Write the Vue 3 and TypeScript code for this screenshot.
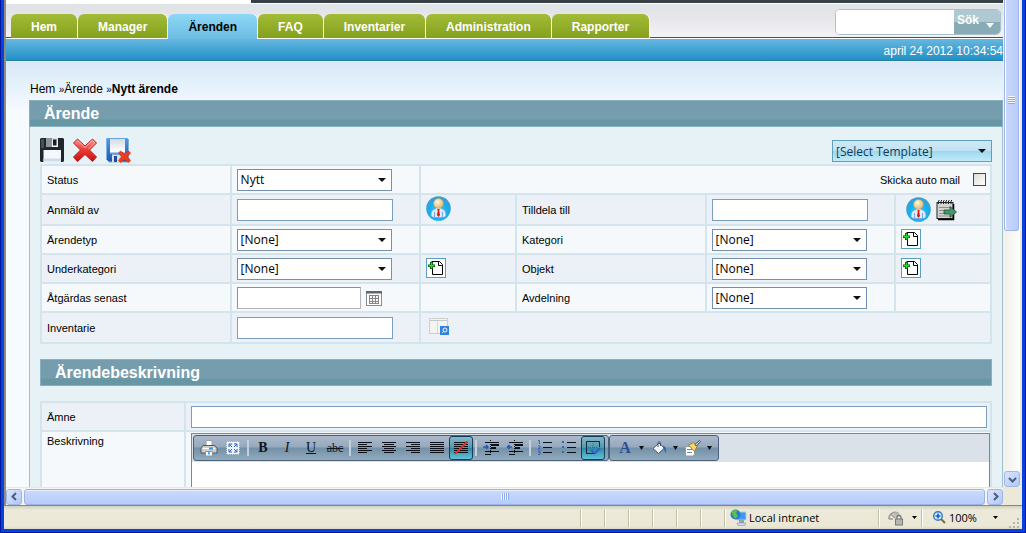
<script setup lang="ts">
import { ref } from 'vue'

interface Tab {
  label: string
  active?: boolean
}

interface Tool {
  id: string
  title: string
  on?: boolean
}

const tabs: Tab[] = [
  { label: 'Hem' },
  { label: 'Manager' },
  { label: 'Ärenden', active: true },
  { label: 'FAQ' },
  { label: 'Inventarier' },
  { label: 'Administration' },
  { label: 'Rapporter' },
]

const toolGroups: Tool[][] = [
  [
    { id: 'print', title: 'Print' },
    { id: 'full', title: 'Full screen' },
  ],
  [
    { id: 'bold', title: 'Bold' },
    { id: 'italic', title: 'Italic' },
    { id: 'underline', title: 'Underline' },
    { id: 'strike', title: 'Strikethrough' },
  ],
  [
    { id: 'left', title: 'Align left' },
    { id: 'center', title: 'Center' },
    { id: 'right', title: 'Align right' },
    { id: 'justify', title: 'Justify' },
    { id: 'noalign', title: 'No alignment', on: true },
  ],
  [
    { id: 'indent', title: 'Indent' },
    { id: 'outdent', title: 'Outdent' },
  ],
  [
    { id: 'ol', title: 'Numbered list' },
    { id: 'ul', title: 'Bullet list' },
    { id: 'borders', title: 'Show borders', on: true },
  ],
]

const colorTools: Tool[] = [
  { id: 'fore', title: 'Text color' },
  { id: 'fill', title: 'Background color' },
  { id: 'brush', title: 'Apply style' },
]

const letters: Record<string, string> = { bold: 'B', italic: 'I', underline: 'U', strike: 'abc', fore: 'A' }

const search = ref('')
const autoMail = ref(false)
const subject = ref('')
</script>

<template>
  <div class="window">
    <svg class="defs" width="0" height="0" aria-hidden="true">
      <defs>
        <linearGradient id="gRed" x1="0" y1="0" x2="0" y2="1">
          <stop offset="0" stop-color="#f59a92" />
          <stop offset="0.5" stop-color="#ea3a34" />
          <stop offset="1" stop-color="#c40f10" />
        </linearGradient>
        <linearGradient id="gBlue" x1="0" y1="0" x2="0" y2="1">
          <stop offset="0" stop-color="#4f9be8" />
          <stop offset="1" stop-color="#1c56ae" />
        </linearGradient>
        <linearGradient id="gPaper" x1="0" y1="0" x2="0" y2="1">
          <stop offset="0" stop-color="#d5dbe0" />
          <stop offset="1" stop-color="#fff" />
        </linearGradient>
        <radialGradient id="gHead" cx="0.4" cy="0.35" r="0.7">
          <stop offset="0" stop-color="#fff6dc" />
          <stop offset="1" stop-color="#d9b36c" />
        </radialGradient>
        <radialGradient id="gCircle" cx="0.5" cy="0.6" r="0.5">
          <stop offset="0" stop-color="#35c8f8" />
          <stop offset="0.8" stop-color="#12aeee" />
          <stop offset="1" stop-color="#3a9fd4" />
        </radialGradient>
      </defs>
      <symbol id="person" viewBox="0 0 25 25">
        <circle cx="12.500" cy="12.500" r="12.300" fill="url(#gCircle)" />
        <path d="M5 19c0-4 2-6 5-6.500h5c3 .5 5 2.500 5 6.500 0 1.500-1.500 2.500-3 2.500H8c-1.500 0-3-1-3-2.500z" fill="#dcecfb" stroke="#6f9fd0" stroke-width=".7" />
        <path d="M8.500 16v5.500M16.500 16v5.500" stroke="#7ba7dc" />
        <path d="M10 12l2.500 3 2.500-3z" fill="#fff" />
        <path d="M11.300 13h2.400l-.5 2 .8 4-1.500 2-1.500-2 .8-4z" fill="#d8151a" />
        <circle cx="12.500" cy="7.500" r="5" fill="url(#gHead)" stroke="#b99250" stroke-width=".5" />
      </symbol>
      <symbol id="add" viewBox="0 0 20 20">
        <rect x=".5" y=".5" width="19" height="19" fill="#fff" stroke="#5b9fc4" />
        <path d="M6.500 4.500v12h10v-10l-3-3h-8" fill="#fff" stroke="#000" />
        <path d="M12.500 4v3.500H16" fill="none" stroke="#000" />
        <path d="M4 4h3v2.500h2v2.500H7v2H4V9H2V6.500h2z" fill="#043d08" />
        <path d="M5.500 4.500v6M2.500 7.700h6" stroke="#1ee02a" stroke-width="1.600" />
      </symbol>
    </svg>

    <div class="browser">
      <main class="page">
        <div class="strip"><span></span></div>
        <header class="masthead">
          <nav class="tabs">
            <a v-for="t in tabs" :key="t.label" href="#" class="tab" :class="{ active: t.active }">{{ t.label }}</a>
          </nav>
          <form class="search" @submit.prevent>
            <input v-model="search" type="text" aria-label="Sök" />
            <button type="submit">Sök<svg width="8" height="5"><path d="M0 0h8L4 5z" fill="#fff" /></svg></button>
          </form>
        </header>
        <div class="datebar">april 24 2012 10:34:54</div>

        <div class="content">
          <div class="crumbs">
            <a href="#">Hem</a> <small>»</small><a href="#">Ärende</a> <small>»</small><b>Nytt ärende</b>
          </div>
          <h1 class="title">Ärende</h1>
          <div class="panel">
            <div class="actions">
              <button type="button" aria-label="Spara">
                <svg width="24" height="24" viewBox="0 0 24 24">
                  <path d="M1 0h22l1 1v22l-1 1H1l-1-1V1z" fill="#20262e" />
                  <path d="M1 1h3v9H1z" fill="#46505c" />
                  <rect x="6" y="0" width="12" height="9" fill="url(#gPaper)" />
                  <rect x="6" y="0" width="6" height="9" fill="#8d949b" />
                  <rect x="13" y="1.500" width="3.500" height="6" fill="#191c20" />
                  <rect x="3.500" y="12" width="17.500" height="12" fill="#f4f7fb" />
                  <path d="M3.500 20.500h17.500v3H3.500z" fill="#d2dbe8" />
                </svg>
              </button>
              <button type="button" aria-label="Avbryt">
                <svg width="24" height="24" viewBox="0 0 24 24">
                  <path d="M4.500 1L12 8l7.500-7L23.500 5l-7 7 7 7-4 4.500L12 16.500l-7.500 7L.5 19l7-7-7-7z" fill="url(#gRed)" stroke="#c01a1c" stroke-linejoin="round" />
                  <path d="M4.600 2.500L12 9.500l7.400-7 2.500 2.500-6.500 6" fill="none" stroke="#fbc4be" stroke-width=".8" />
                </svg>
              </button>
              <button type="button" aria-label="Spara och stäng">
                <svg width="25" height="25" viewBox="0 0 25 25">
                  <path d="M1 0h20l1.500 1.500V24H3l-2.500-2.500V1z" fill="url(#gBlue)" stroke="#7fb0e4" />
                  <rect x="4" y="1" width="15" height="13" fill="url(#gPaper)" />
                  <path d="M4 14h15v1.500H4z" fill="#a9c9ee" />
                  <rect x="6" y="16.500" width="10" height="8" fill="#d7dfe6" />
                  <rect x="8" y="18" width="3" height="6" fill="#1e4d91" />
                  <path d="M14.500 13l4 3 4-3 2 2-3 3.700 3 3.800-2 2-4-3-4 3-2-2 3-3.800-3-3.700z" fill="#ee3c1c" stroke="#c93016" stroke-width=".7" />
                </svg>
              </button>
              <span class="sel template">
                <select aria-label="Mall"><option>[Select Template]</option></select>
              </span>
            </div>

            <table class="grid fields">
              <colgroup><col class="wide" /><col class="wide" /><col class="slim" /><col class="wide" /><col class="wide" /><col class="slim" /></colgroup>
              <tbody>
                <tr>
                  <td><label for="status">Status</label></td>
                  <td><span class="sel"><select id="status"><option>Nytt</option></select></span></td>
                  <td colspan="4" class="auto">
                    <label for="auto">Skicka auto mail</label><input id="auto" v-model="autoMail" type="checkbox" />
                  </td>
                </tr>
                <tr class="tall">
                  <td><label for="reporter">Anmäld av</label></td>
                  <td><input id="reporter" class="txt" type="text" /></td>
                  <td><button type="button" aria-label="Välj person"><svg width="25" height="25"><use href="#person" /></svg></button></td>
                  <td><label for="assign">Tilldela till</label></td>
                  <td><input id="assign" class="txt" type="text" /></td>
                  <td class="pair">
                    <button type="button" aria-label="Välj ansvarig"><svg width="25" height="25"><use href="#person" /></svg></button>
                    <button type="button" aria-label="Tilldela mig">
                      <svg width="21" height="22" viewBox="0 0 21 22">
                        <rect x="1" y="3.500" width="16" height="16" fill="#d4d4d0" stroke="#222" />
                        <path d="M17.500 5v15.500H2" fill="none" stroke="#000" stroke-width="1.500" />
                        <path d="M3 8.500h12M3 11.500h9M3 14.500h9M3 17h12" stroke="#8f8f8b" />
                        <path d="M2.500 5V2l1-1M5 5V2l1-1M7.500 5V2l1-1M10 5V2l1-1M12.500 5V2l1-1M15 5V2l1-1" fill="none" stroke="#222" />
                        <path d="M8 11h6V7.500l6.500 5.500-6.500 5.500V15H8z" fill="#4b9473" stroke="#1d4f38" stroke-width=".8" />
                      </svg>
                    </button>
                  </td>
                </tr>
                <tr>
                  <td><label for="kind">Ärendetyp</label></td>
                  <td><span class="sel"><select id="kind"><option>[None]</option></select></span></td>
                  <td></td>
                  <td><label for="category">Kategori</label></td>
                  <td><span class="sel"><select id="category"><option>[None]</option></select></span></td>
                  <td><button type="button" aria-label="Lägg till kategori"><svg width="20" height="20"><use href="#add" /></svg></button></td>
                </tr>
                <tr>
                  <td><label for="sub">Underkategori</label></td>
                  <td><span class="sel"><select id="sub"><option>[None]</option></select></span></td>
                  <td><button type="button" aria-label="Lägg till underkategori"><svg width="20" height="20"><use href="#add" /></svg></button></td>
                  <td><label for="object">Objekt</label></td>
                  <td><span class="sel"><select id="object"><option>[None]</option></select></span></td>
                  <td><button type="button" aria-label="Lägg till objekt"><svg width="20" height="20"><use href="#add" /></svg></button></td>
                </tr>
                <tr>
                  <td><label for="due">Åtgärdas senast</label></td>
                  <td>
                    <div class="date">
                      <input id="due" class="txt" type="text" />
                      <button type="button" aria-label="Kalender">
                        <svg width="16" height="16" viewBox="0 0 16 16">
                          <rect x=".5" y="1.500" width="15" height="14" fill="#fff" stroke="#8a8a8a" />
                          <path d="M0 1h16v2.500H0z" fill="#666" />
                          <path d="M3 5.500h10M3 8.500h10M3 11.500h10M3 13.500h10M3.500 5v9M6.500 5v9M9.500 5v9M12.500 5v9" stroke="#858585" />
                        </svg>
                      </button>
                    </div>
                  </td>
                  <td></td>
                  <td><label for="dept">Avdelning</label></td>
                  <td><span class="sel"><select id="dept"><option>[None]</option></select></span></td>
                  <td></td>
                </tr>
                <tr class="tall">
                  <td><label for="inventory">Inventarie</label></td>
                  <td><input id="inventory" class="txt" type="text" /></td>
                  <td colspan="4" class="lookup">
                    <button type="button" aria-label="Sök inventarie">
                      <svg width="20" height="17" viewBox="0 0 20 17">
                        <rect x=".5" y=".5" width="18" height="15" fill="#f3f3f0" stroke="#cfcfcc" />
                        <path d="M1 2.500h17" stroke="#c4c8cc" />
                        <path d="M8.500 3v12" stroke="#d8d8d4" />
                        <rect x="11" y="8" width="9" height="9" fill="#2f82e0" />
                        <circle cx="16" cy="12" r="2" fill="none" stroke="#fff" />
                        <path d="M14.500 13.500L13 15" stroke="#fff" />
                      </svg>
                    </button>
                  </td>
                </tr>
              </tbody>
            </table>

            <h2 class="title">Ärendebeskrivning</h2>

            <table class="grid desc">
              <colgroup><col class="name" /><col /></colgroup>
              <tbody>
                <tr>
                  <td><label for="subject">Ämne</label></td>
                  <td><input id="subject" v-model="subject" class="txt full" type="text" /></td>
                </tr>
                <tr class="body">
                  <td><label for="text">Beskrivning</label></td>
                  <td>
                    <div class="editor">
                      <div class="toolbar">
                        <div class="group">
                          <template v-for="(g, i) in toolGroups" :key="i">
                            <i v-if="i > 0" class="sep"></i>
                            <button v-for="t in g" :key="t.id" type="button" class="tool" :class="[t.id, { on: t.on }]" :aria-label="t.title">
                              <template v-if="letters[t.id]">{{ letters[t.id] }}</template>
                              <svg v-else width="18" height="18" viewBox="0 0 18 18" fill="none" stroke="#0b1018">
                                <template v-if="t.id === 'print'">
                                  <path d="M6 1.500h6v6H6z" fill="#fff" stroke="#9aa1ab" />
                                  <path d="M3 6.500h12l2 3v4.500H1V9.500z" fill="#cfcfcd" stroke="#55585d" />
                                  <path d="M3 9.500h12" stroke="#fff" />
                                  <path d="M9 9.500h4" stroke="#3d8ee8" stroke-width="2" />
                                  <path d="M5.500 12.500h7v4.500h-7z" fill="#f4fbff" stroke="#8d949e" />
                                  <path d="M9 13v2.500" stroke="#4fb1f0" stroke-width="2" />
                                </template>
                                <template v-else-if="t.id === 'full'">
                                  <rect x="3" y="3" width="12" height="12" fill="#e9f2ff" stroke="#fff" stroke-dasharray="1 1" />
                                  <path d="M5 8V5h3M5 5l3 3M13 8V5h-3M13 5l-3 3M5 10v3h3M5 13l3-3M13 10v3h-3M13 13l-3-3" stroke="#3566c4" />
                                </template>
                                <path v-else-if="t.id === 'left'" d="M2 3.500h14M2 5.500h9M2 7.500h14M2 9.500h9M2 11.500h14M2 13.500h9" />
                                <path v-else-if="t.id === 'center'" d="M2 3.500h14M4 5.500h10M2 7.500h14M4 9.500h10M2 11.500h14M4 13.500h10" />
                                <path v-else-if="t.id === 'right'" d="M2 3.500h14M7 5.500h9M2 7.500h14M7 9.500h9M2 11.500h14M7 13.500h9" />
                                <path v-else-if="t.id === 'justify'" d="M2 3.500h14M2 5.500h14M2 7.500h14M2 9.500h14M2 11.500h14M2 13.500h14" />
                                <template v-else-if="t.id === 'noalign'">
                                  <path d="M2 3.500h14M2 5.500h14M2 7.500h14M2 9.500h14M2 11.500h14M2 13.500h14" />
                                  <path d="M3 15L15.500 2.500" stroke="#f02a1c" stroke-width="2" />
                                </template>
                                <template v-else-if="t.id === 'indent'">
                                  <path d="M3 3.500h14M3 12.500h14M3 15.500h6" />
                                  <path d="M9 6h8M9 9h5" stroke-width="2" />
                                  <path d="M8.500 1v16" stroke-dasharray="1 1" />
                                  <path d="M1 8h5M4 6l2 2-2 2" stroke="#2458b8" stroke-width="1.500" />
                                </template>
                                <template v-else-if="t.id === 'outdent'">
                                  <path d="M3 3.500h14M3 12.500h14M3 15.500h6" />
                                  <path d="M9 6h8M9 9h5" stroke-width="2" />
                                  <path d="M8.500 1v16" stroke-dasharray="1 1" />
                                  <path d="M1 8h5M3.500 6l-2 2 2 2" stroke="#2458b8" stroke-width="1.500" />
                                </template>
                                <template v-else-if="t.id === 'ol'">
                                  <path d="M7 3.500h9M7 8.500h9M7 13.500h9" />
                                  <path d="M2 1.500h1.500V5M2 7h2v1.500L2 10h2.500M2 12h2v3.500H2M2.500 13.500H4" stroke="#3a64b4" />
                                </template>
                                <template v-else-if="t.id === 'ul'">
                                  <path d="M7 3.500h9M7 8.500h9M7 13.500h9" />
                                  <path d="M2 3h2M2 8h2M2 13h2" stroke="#3a64b4" stroke-width="2" />
                                </template>
                                <template v-else>
                                  <path d="M15.500 8V2.500h-13v12h8" stroke="#16233c" />
                                  <path d="M9 4v9M4 8.500h9" stroke="#2b6b88" stroke-dasharray="1 1" />
                                  <path d="M7 11l3.500 3.500L16 9" stroke="#2e62c0" stroke-width="2" />
                                </template>
                              </svg>
                            </button>
                          </template>
                        </div>
                        <div class="group">
                          <button v-for="t in colorTools" :key="t.id" type="button" class="tool drop" :aria-label="t.title">
                            <span v-if="t.id === 'fore'" class="fore">A</span>
                            <svg v-else-if="t.id === 'fill'" class="pic" width="18" height="18" viewBox="0 0 18 18">
                              <path d="M3 9.500L9 4l5.500 5-6 5.500z" fill="#f2f6fb" stroke="#44546c" />
                              <path d="M8 8V3.500a1.500 1.500 0 0 1 2.500 0V7" fill="none" stroke="#44546c" />
                              <path d="M13 7c3 0 3.500 3 3 7-1.500-1-1.500-4-3-5z" fill="#2f62c4" />
                            </svg>
                            <svg v-else class="pic" width="18" height="18" viewBox="0 0 18 18">
                              <path d="M1.500 7.500h9v8l-2 1.500h-7z" fill="#fff" stroke="#9298a4" />
                              <path d="M3 10.500h5M3 13.500h5" stroke="#6f87b8" />
                              <path d="M4.500 6l5-2.500 3.500 4-2.500 5z" fill="#f6d768" stroke="#9c8028" />
                              <path d="M11 5.500l4.500-4 1 1-4 4.500z" fill="#d9e0ea" stroke="#3d4a5e" />
                            </svg>
                            <svg class="tri" width="5" height="4"><path d="M0 0h5L2.500 4z" fill="#111" /></svg>
                          </button>
                        </div>
                      </div>
                      <textarea id="text" rows="6"></textarea>
                    </div>
                  </td>
                </tr>
              </tbody>
            </table>
          </div>
        </div>
      </main>

      <div class="vscroll">
        <div class="vthumb"><span></span></div>
        <button type="button" class="sbtn" aria-label="Nedåt">
          <svg width="9" height="9" viewBox="0 0 9 9"><path d="M1 3l3.500 3.500L8 3" fill="none" stroke="#46607f" stroke-width="2" /></svg>
        </button>
      </div>
      <div class="hscroll">
        <button type="button" class="sbtn" aria-label="Vänster">
          <svg width="9" height="9" viewBox="0 0 9 9"><path d="M6 1L2.500 4.500 6 8" fill="none" stroke="#46607f" stroke-width="2" /></svg>
        </button>
        <div class="hthumb"><span></span></div>
        <button type="button" class="sbtn" aria-label="Höger">
          <svg width="9" height="9" viewBox="0 0 9 9"><path d="M3 1l3.500 3.500L3 8" fill="none" stroke="#46607f" stroke-width="2" /></svg>
        </button>
      </div>
      <div class="corner"></div>
    </div>

    <footer class="status">
      <i v-for="n in 6" :key="n" class="cell"></i>
      <div class="zone">
        <svg width="17" height="17" viewBox="0 0 17 17">
          <rect x="6" y="3" width="10" height="8" rx="1" fill="#3e9af0" stroke="#b8c6d8" />
          <path d="M9 11h5v3H9z" fill="#8fa3bd" />
          <path d="M7 14h9l-1 2.500H8z" fill="#d5dde8" stroke="#8c9cb2" stroke-width=".7" />
          <circle cx="5.500" cy="5.500" r="5" fill="#2c78d4" />
          <path d="M1.500 3C3 .5 6 .5 7.500 1.500L6 4.500l2 2-2 3C3.500 9 4 7 2.500 6z" fill="#5cc14a" />
        </svg>
        Local intranet
      </div>
      <button type="button" class="lock" aria-label="Skyddat läge">
        <svg width="16" height="16" viewBox="0 0 16 16">
          <path d="M1 9a6 6 0 0 1 10-5M1 9h4M3 4l4 4" fill="none" stroke="#9a9a96" stroke-width="1.500" />
          <path d="M5 3a6 6 0 0 1 7 1L8 8z" fill="#b9b9b5" />
          <path d="M9 9V7.500a2 2 0 0 1 4 0V9" fill="none" stroke="#777" stroke-width="1.300" />
          <rect x="7.500" y="9" width="7" height="6" fill="#b5b5b2" stroke="#777" />
        </svg>
        <svg width="5" height="3"><path d="M0 0h5L2.500 3z" fill="#000" /></svg>
      </button>
      <button type="button" class="zoom">
        <svg width="13" height="13" viewBox="0 0 13 13">
          <path d="M8 8l4 4" stroke="#8b6b45" stroke-width="2.200" />
          <circle cx="5" cy="5" r="4.300" fill="#d6ecff" stroke="#3479c8" stroke-width="1.400" />
          <path d="M5 2.500v5M2.500 5h5" stroke="#1760c0" stroke-width="1.600" />
        </svg>
        100%
        <svg class="last" width="5" height="3"><path d="M0 0h5L2.500 3z" fill="#000" /></svg>
      </button>
      <svg class="grip" width="12" height="12" fill="#b8b4a2">
        <path d="M9 1h2v2H9zM5 5h2v2H5zM9 5h2v2H9zM1 9h2v2H1zM5 9h2v2H5zM9 9h2v2H9z" />
      </svg>
    </footer>
  </div>
</template>

<style>
body {
  margin: 0;
  background: #0a3fd8;
}
</style>

<style scoped>
.window {
  box-sizing: border-box;
  display: flex;
  flex-direction: column;
  height: 100vh;
  border: solid #0016a0;
  border-width: 0 1px 1px;
  padding: 0 3px 3px;
  overflow: hidden;
  background: #0842dc;
  font-family: "Liberation Sans", Arial, sans-serif;
  font-size: 12px;
  color: #000;
}
.window * {
  box-sizing: border-box;
}
.defs {
  position: absolute;
}
button {
  margin: 0;
  padding: 0;
  border: 0;
  background: none;
  font: inherit;
  color: inherit;
  cursor: pointer;
}
svg {
  display: block;
  flex: none;
}
a {
  color: inherit;
  text-decoration: none;
}
.browser {
  flex: 1;
  min-height: 0;
  display: grid;
  grid-template-columns: minmax(0, 1fr) 17px;
  grid-template-rows: minmax(0, 1fr) 18px;
  border: solid;
  border-width: 0 2px;
  border-color: #ece9d8 #ece9d8 #ece9d8 #8f8c80;
}
.page {
  overflow: hidden;
  background: #f6fbff;
}
.strip {
  height: 4px;
  border-bottom: 1px solid #fff;
  background: #fff;
}
.strip span {
  display: block;
  height: 3px;
  margin-left: 245px;
  background: #373f47;
}
.masthead {
  display: flex;
  justify-content: space-between;
  height: 34px;
  border-bottom: 1px solid #285c70;
  background: linear-gradient(#dfe4e6, #e4e4e9 30%, #f3f3f5);
}
.tabs {
  position: relative;
  display: flex;
  align-items: flex-start;
  gap: 1px;
  padding: 10px 0 0 5px;
}
.tab {
  height: 24px;
  padding: 0 20px;
  border-radius: 6px 6px 0 0;
  background: linear-gradient(#a3bc37, #84a01c);
  box-shadow: 1px 0 #fafcf0;
  line-height: 26px;
  font-weight: bold;
  color: #fff;
}
.tab.active {
  height: 25px;
  background: linear-gradient(#8dd8f8, #6cbbe0);
  color: #000;
}
.search {
  display: flex;
  width: 166px;
  height: 26px;
  margin: 5px 2px 0 0;
  border: 1px solid #abc1c9;
  border-radius: 5px;
  overflow: hidden;
  background: #fff;
}
.search input {
  flex: 1;
  min-width: 0;
  border: 0;
  outline: 0;
  background: #fff;
}
.search button {
  display: flex;
  gap: 7px;
  width: 46px;
  padding: 3px;
  background: linear-gradient(#afc8d1 50%, #89abb6 50%);
  line-height: 15px;
  font-weight: bold;
  color: #fff;
}
.search button svg {
  margin-top: 10px;
}
.datebar {
  height: 23px;
  border-top: 1px solid #fff;
  border-bottom: 1px solid #25809f;
  background: linear-gradient(#66b7df, #2390c6);
  line-height: 25px;
  text-align: right;
  color: #fff;
}
.content {
  padding: 17px 0 0 23px;
  background: linear-gradient(#dae8f8, #e3f2fb 24px, #f0f5fe 38px, #f6fbff 50px);
}
.crumbs {
  height: 22px;
  padding-left: 1px;
  line-height: 22px;
}
.crumbs small {
  font-size: 10px;
}
.title {
  height: 27px;
  margin: 0;
  padding-left: 14px;
  border: 1px solid #86b0bd;
  background: linear-gradient(#759dad 72%, #6797a5 76%);
  line-height: 25px;
  font-size: 16px;
  font-weight: bold;
  color: #fff;
}
.panel {
  padding: 0 10px 10px;
  border: solid #a2bfcb;
  border-width: 0 1px;
  background: #e7f2f7;
}
.actions {
  display: flex;
  align-items: flex-start;
  gap: 9px;
  height: 37px;
  padding-top: 11px;
}
.sel {
  position: relative;
  display: block;
  width: 155px;
}
.sel::after {
  content: "";
  position: absolute;
  top: 9px;
  right: 6px;
  border: solid transparent;
  border-width: 4px 4px 0;
  border-top-color: #111;
  pointer-events: none;
}
.sel select {
  display: block;
  width: 100%;
  height: 22px;
  padding: 0 3px;
  border: 1px solid #7590ae;
  border-radius: 0;
  outline: 0;
  appearance: none;
  background: #fff;
  font: 12px "Open Sans", "Noto Sans", sans-serif;
  color: #000;
}
.template {
  width: 160px;
  margin: 2px 0 0 auto;
}
.template select {
  border-color: #5f9fbf;
  background: linear-gradient(#cfe9f6, #c0e2f4 50%, #9ad7f0 50%, #c3eaf8);
  color: #123c54;
}
.grid {
  width: 100%;
  table-layout: fixed;
  border-spacing: 2px;
  background: #d3e4ed;
  font-size: 11px;
}
.grid td {
  height: 27px;
  padding: 0 5px;
  background: #ebf1f6;
  vertical-align: middle;
}
.fields tr:nth-child(odd) td {
  background: #f6f9fb;
}
.grid .tall td {
  height: 29px;
}
.wide {
  width: 20%;
}
.slim {
  width: 10%;
}
.name {
  width: 142px;
}
.txt {
  display: block;
  width: 156px;
  height: 22px;
  border: 1px solid #7b9ebd;
  outline: 0;
  background: #fff;
}
.full {
  width: calc(100% + 2px);
}
.date {
  display: flex;
  align-items: center;
  gap: 5px;
}
.date .txt {
  width: 124px;
  border-color: #8e8f8f #b5b5b5 #b5b5b5 #8e8f8f;
}
.grid .auto {
  padding-right: 4px;
  text-align: right;
}
.auto label,
.auto input {
  vertical-align: middle;
}
.auto input {
  width: 13px;
  height: 13px;
  margin: 0 0 0 13px;
  border: 1px solid #1d5281;
  appearance: none;
  background: linear-gradient(135deg, #dcdcd7, #fff);
}
.auto input:checked {
  background: #21a121;
}
.pair button {
  display: inline-block;
  vertical-align: middle;
}
.grid .pair {
  padding-left: 10px;
}
.pair button + button {
  margin-left: 5px;
}
.grid .lookup {
  padding-left: 8px;
}
h2.title {
  margin: 15px 0;
}
.desc .body td {
  padding: 1px 0 0 5px;
  background: #f6f9fb;
  vertical-align: top;
}
.body label {
  display: block;
  line-height: 16px;
}
.editor {
  border: 1px solid #7089a4;
  background: #fff;
}
.toolbar {
  display: flex;
  height: 28px;
  padding: 1px;
  background: #dae1e8;
}
.group {
  display: flex;
  height: 26px;
  padding: 0 3px;
  border: 1px solid #4c627c;
  border-radius: 3px;
  background: linear-gradient(#abb9ca, #96a9bd 46%, #7390a8 50%, #92abbc);
}
.sep {
  width: 2px;
  height: 16px;
  margin: 4px 2px;
  border: solid;
  border-width: 0 1px;
  border-color: #5d7085 #c5d0db;
}
.tool {
  display: flex;
  align-items: center;
  justify-content: center;
  width: 24px;
  height: 24px;
  font-family: "Liberation Serif", "Times New Roman", serif;
  font-size: 14px;
  color: #10151d;
}
.bold {
  font-weight: bold;
}
.italic {
  font-style: italic;
}
.underline {
  text-decoration: underline;
}
.strike {
  font-size: 12px;
  text-decoration: line-through;
}
.on {
  border: 1px solid #123e58;
  border-radius: 3px;
  background: linear-gradient(#87b8c8, #4e97ae 50%, #2f87a3 50%, #62c3d6);
}
.drop {
  width: 34px;
  justify-content: flex-start;
}
.fore,
.pic {
  width: 18px;
  margin: 0 5px 0 3px;
}
.fore {
  font-size: 16px;
  font-weight: bold;
  color: #2c4f94;
}
.editor textarea {
  display: block;
  width: 100%;
  border: 0;
  outline: 0;
  resize: none;
}
.vscroll {
  display: flex;
  flex-direction: column;
  justify-content: space-between;
  padding: 0 1px;
  background: linear-gradient(90deg, #f1f0ea, #fdfdfa);
}
.vthumb {
  display: flex;
  align-items: center;
  justify-content: center;
  height: 231px;
  border: solid #9db5e8;
  border-width: 0 1px 1px;
  border-radius: 0 0 3px 3px;
  box-shadow: inset 1px 0 #fff;
  background: linear-gradient(90deg, #cad9fd, #b9cbf8);
}
.vthumb span {
  width: 7px;
  height: 8px;
  margin-bottom: 31px;
  background: repeating-linear-gradient(#f2f6ff 0 1px, #8caaee 1px 2px);
}
.hscroll {
  display: flex;
  align-items: center;
  gap: 2px;
  border-top: 1px solid #ece9d8;
  background: #f6f5ef;
}
.hthumb {
  flex: 1;
  display: flex;
  align-items: center;
  justify-content: center;
  height: 16px;
  border: 1px solid #98b3e6;
  border-radius: 3px;
  box-shadow: inset 0 1px #e8efff;
  background: linear-gradient(#cad9fd, #b8cbf9);
}
.hthumb span {
  width: 8px;
  height: 7px;
  background: repeating-linear-gradient(90deg, #f2f6ff 0 1px, #8caaee 1px 2px);
}
.sbtn {
  display: flex;
  align-items: center;
  justify-content: center;
  width: 16px;
  height: 16px;
  border: 1px solid #9fb6e8;
  border-radius: 3px;
  background: linear-gradient(135deg, #d9e4ff, #b3c7f8);
}
.corner {
  background: #ece9d8;
}
.status {
  display: flex;
  align-items: center;
  justify-content: flex-end;
  height: 24px;
  border-top: 1px solid #8b8774;
  background: linear-gradient(#d2cfbd, #ebe9d9 4px, #ebe8d6 20px, #dedac5);
  font: 11px "Open Sans", "Noto Sans", sans-serif;
}
.cell,
.zone,
.lock,
.zoom {
  height: 18px;
}
.cell,
.zone,
.lock {
  border-left: 1px solid #c3bfaa;
  box-shadow: inset 1px 0 #fff;
}
.cell {
  width: 24px;
}
.zone,
.lock,
.zoom {
  display: flex;
  align-items: center;
}
.zone {
  gap: 2px;
  width: 154px;
  padding-left: 5px;
}
.lock {
  gap: 8px;
  width: 43px;
  padding-left: 9px;
}
.zoom {
  gap: 3px;
  width: 87px;
  padding-left: 11px;
  border-left: 1px solid #c3bfaa;
  box-shadow: inset 1px 0 #fff;
}
.last {
  margin-left: 13px;
}
.grip {
  align-self: flex-end;
  margin-right: 2px;
}
</style>
